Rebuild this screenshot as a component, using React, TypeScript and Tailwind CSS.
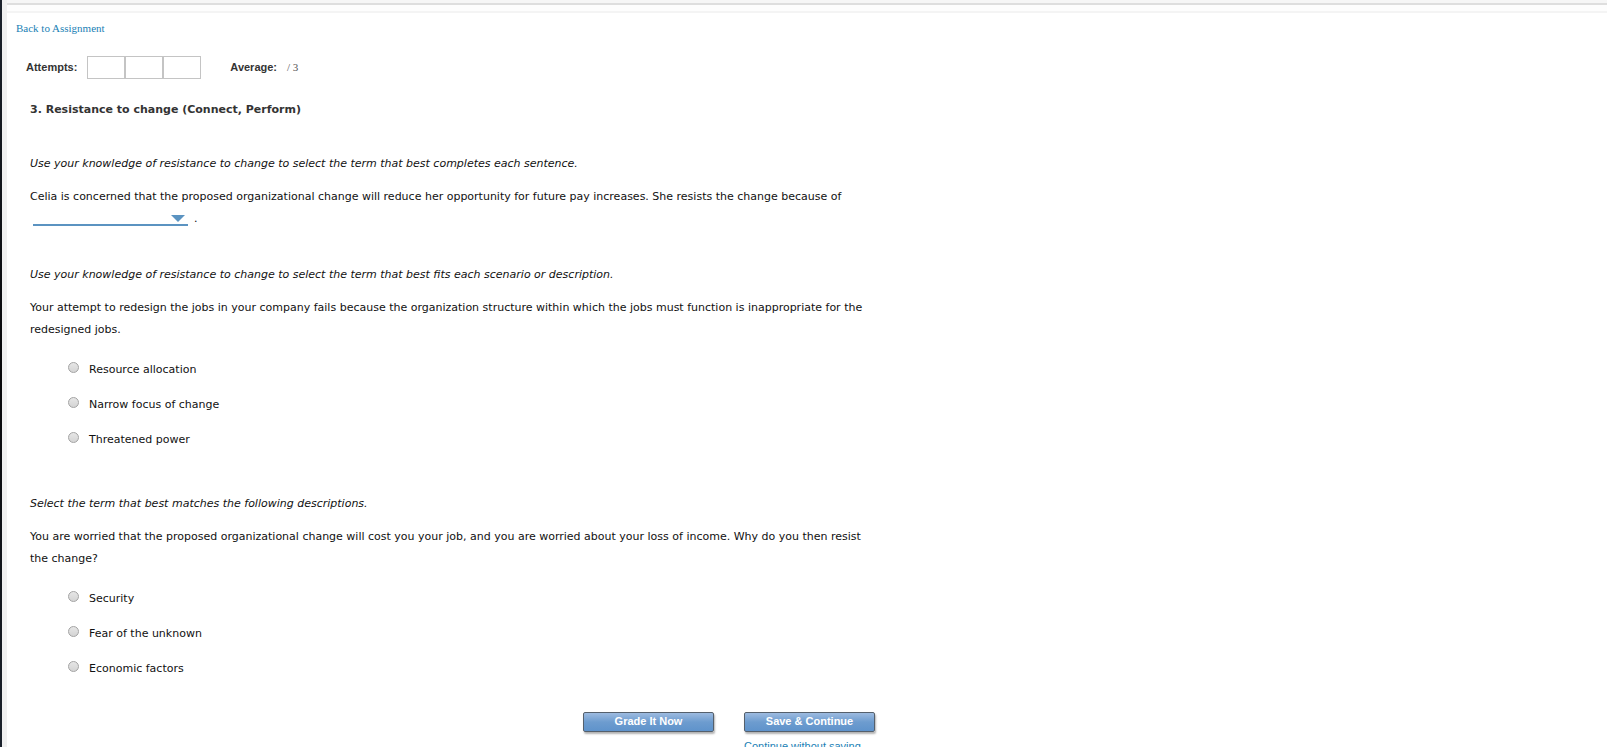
import type { ReactNode } from "react";

function Options({ name, items }: { name: string; items: string[] }) {
  return (
    <ul className="mt-[18px] flex flex-col gap-[13px] pl-[38px]">
      {items.map((item) => (
        <li key={item}>
          <label className="flex w-fit gap-[10px]">
            <input
              type="radio"
              name={name}
              className="mt-[3px] size-[11px] shrink-0 appearance-none rounded-full border border-[#a3a3a3] bg-linear-to-b from-[#e6e6e6] to-[#d4d4d4] checked:bg-[#4d8fc4]"
            />
            <span>{item}</span>
          </label>
        </li>
      ))}
    </ul>
  );
}

function Question({ intro, children }: { intro: string; children: ReactNode }) {
  return (
    <section>
      <p className="mb-[11px] italic">{intro}</p>
      {children}
    </section>
  );
}

const buttonStyle =
  "h-5 w-[131px] rounded-[2px] border border-[#55606c] bg-linear-to-b from-[#9dbbe0] via-[#6d9ccf] to-[#5f93cb] pb-[2px] text-[11px] leading-[16px] font-bold text-white shadow-[1px_2px_2px_rgba(0,0,0,0.3)]";

export default function App() {
  return (
    <div className="flex h-screen overflow-hidden bg-white font-['Liberation_Sans',sans-serif]">
      <div className="w-[2px] shrink-0 bg-linear-to-b from-[#1b222c] via-[#08080a] to-[#1b222c]" />
      <div className="w-[5px] shrink-0 bg-[#f0f0f0]" />
      <div className="min-w-0 grow">
        <div className="h-[5px] border-b-2 border-[#dedede] bg-[#f6f6f6]" />
        <div className="h-2 border-b-2 border-[#f4f4f4] bg-[#fdfdfd]" />
        <main className="max-w-[890px] pl-[9px]">
          <a
            href="#assignment"
            className="mt-[7px] block w-fit font-['Liberation_Serif',serif] text-[11px] leading-[16px] text-[#1a7fb5]"
          >
            Back to Assignment
          </a>
          <div className="mt-5 flex items-start pl-[10px] text-[11px] leading-[22px] text-[#333]">
            <span className="font-bold">Attempts:</span>
            <div className="ml-[10px] flex h-[23px] border border-[#c4c4c4]">
              <span className="w-[38px] border-r-2 border-[#c4c4c4]" />
              <span className="w-[38px] border-r-2 border-[#c4c4c4]" />
              <span className="w-[36px]" />
            </div>
            <span className="ml-[29px] font-bold">Average:</span>
            <span className="ml-[10px] font-['Liberation_Serif',serif] text-[#555]">/ 3</span>
          </div>
          <div className="pr-4 pl-[14px] font-['DejaVu_Sans',sans-serif] text-[11px] leading-[22px] text-[#111]">
            <h1 className="mt-5 font-bold text-[#333]">
              3. Resistance to change (Connect, Perform)
            </h1>
            <div className="mt-8">
              <Question intro="Use your knowledge of resistance to change to select the term that best completes each sentence.">
                <p>
                  Celia is concerned that the proposed organizational change will reduce her
                  opportunity for future pay increases. She resists the change because of
                </p>
                <div className="flex items-center gap-[6px] pl-[3px]">
                  <div className="relative h-[22px] w-[155px]">
                    <select
                      aria-label="Reason for resistance"
                      className="block h-[18px] w-full appearance-none border-b-2 border-[#5b93c1] bg-transparent"
                    >
                      <option></option>
                      <option>economic factors</option>
                      <option>security</option>
                    </select>
                    <svg
                      viewBox="0 0 14 7"
                      className="pointer-events-none absolute top-[7px] right-[3px] h-[7px] w-[14px]"
                    >
                      <path d="M0 0H14L7 7Z" fill="#5b93c1" />
                    </svg>
                  </div>
                  <span>.</span>
                </div>
              </Question>
            </div>
            <div className="mt-[34px]">
              <Question intro="Use your knowledge of resistance to change to select the term that best fits each scenario or description.">
                <p>
                  Your attempt to redesign the jobs in your company fails because the organization
                  structure within which the jobs must function is inappropriate for the redesigned
                  jobs.
                </p>
                <Options
                  name="redesign"
                  items={["Resource allocation", "Narrow focus of change", "Threatened power"]}
                />
              </Question>
            </div>
            <div className="mt-[42px]">
              <Question intro="Select the term that best matches the following descriptions.">
                <p>
                  You are worried that the proposed organizational change will cost you your job,
                  and you are worried about your loss of income. Why do you then resist the change?
                </p>
                <Options
                  name="income"
                  items={["Security", "Fear of the unknown", "Economic factors"]}
                />
              </Question>
            </div>
          </div>
          <div className="mt-8 flex justify-end gap-[30px] pr-[22px]">
            <button type="button" className={buttonStyle}>
              Grade It Now
            </button>
            <div className="w-[131px]">
              <button type="button" className={`block ${buttonStyle}`}>
                Save &amp; Continue
              </button>
              <a
                href="#next"
                className="mt-[6px] block text-[11px] leading-[16px] whitespace-nowrap text-[#1a7fb5]"
              >
                Continue without saving
              </a>
            </div>
          </div>
        </main>
      </div>
    </div>
  );
}
